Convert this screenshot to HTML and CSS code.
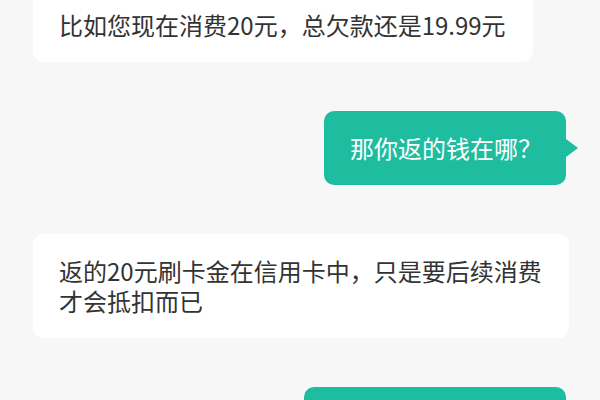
FILE: index.html
```html
<!DOCTYPE html>
<html lang="zh-CN">
<head>
<meta charset="utf-8">
<title>聊天</title>
<link rel="stylesheet" href="styles.css">
</head>
<body>
<div class="chat">
  <div class="row left">
    <div class="bubble in">比如您现在消费20元，总欠款还是19.99元</div>
  </div>
  <div class="row right">
    <div class="bubble out ask">那你返的钱在哪？</div>
  </div>
  <div class="row left">
    <div class="bubble in wide">返的20元刷卡金在信用卡中，只是要后续消费才会抵扣而已</div>
  </div>
  <div class="row right">
    <div class="bubble out last"></div>
  </div>
</div>
</body>
</html>
```
FILE: styles.css
```css
html, body {
  margin: 0;
  padding: 0;
  background: #f7f7f7;
  overflow: hidden;
}
.chat {
  width: 600px;
  display: flex;
  flex-direction: column;
  gap: 49px;
  margin-top: -12px;
  font-family: "Noto Sans CJK SC", "Noto Sans", sans-serif;
  font-size: 24px;
  line-height: 30px;
}
.row {
  display: flex;
  flex-shrink: 0;
}
.row.left {
  justify-content: flex-start;
  padding-left: 33px;
}
.row.right {
  justify-content: flex-end;
  padding-right: 34px;
}
.bubble {
  position: relative;
  padding: 22px 27px 22px 26px;
  border-radius: 10px;
  box-sizing: border-box;
}
.bubble.in {
  background: #ffffff;
  color: #333333;
  max-width: 540px;
}
.bubble.in.wide {
  width: 536px;
}
.bubble.out {
  background: #1ebd9f;
  color: #ffffff;
}
.bubble.out.ask {
  padding-right: 24px;
}
.bubble.out::after {
  content: "";
  position: absolute;
  right: -12px;
  top: 50%;
  margin-top: -9px;
  border-left: 12px solid #1ebd9f;
  border-top: 9px solid transparent;
  border-bottom: 9px solid transparent;
}
.bubble.out.last {
  width: 262px;
  height: 74px;
}
```
